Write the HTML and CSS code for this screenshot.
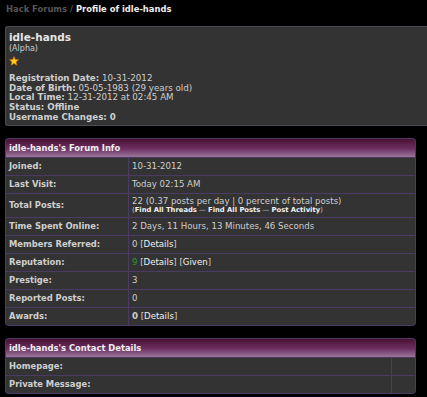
FILE: index.html
```html
<!DOCTYPE html>
<html lang="en">
<head>
  <meta charset="UTF-8">
  <meta name="viewport" content="width=device-width, initial-scale=1.0">
  <title>Hack Forums - Profile of idle-hands</title>
  <link rel="stylesheet" href="styles.css">
</head>
<body>
  <div class="page">
    <div class="breadcrumb">
      <a href="#" class="crumb-home">Hack Forums</a> <span class="crumb-sep">/</span> <span class="crumb-current">Profile of idle-hands</span>
    </div>

    <div class="profile-box">
      <div class="username">idle-hands</div>
      <div class="usertitle">(Alpha)</div>
      <div class="stars">
        <svg width="10" height="10" viewBox="0 0 10 10">
          <polygon points="5,0.6 6.3,3.6 9.5,3.8 7.1,5.9 7.9,9.2 5,7.4 2.1,9.2 2.9,5.9 0.5,3.8 3.7,3.6" fill="#ffd21a" stroke="#c86a00" stroke-width="0.8" stroke-linejoin="round"/>
        </svg>
      </div>
      <div class="profile-facts">
        <div><b>Registration Date:</b> 10-31-2012</div>
        <div><b>Date of Birth:</b> 05-05-1983 (29 years old)</div>
        <div><b>Local Time:</b> 12-31-2012 at 02:45 AM</div>
        <div><b>Status: Offline</b></div>
        <div><b>Username Changes: 0</b></div>
      </div>
    </div>

    <table class="tborder forum-info">
      <tr>
        <th colspan="2" class="thead">idle-hands's Forum Info</th>
      </tr>
      <tr>
        <td class="label">Joined:</td>
        <td>10-31-2012</td>
      </tr>
      <tr>
        <td class="label">Last Visit:</td>
        <td>Today 02:15 AM</td>
      </tr>
      <tr>
        <td class="label">Total Posts:</td>
        <td class="multi">
          22 (0.37 posts per day | 0 percent of total posts)
          <div class="smalltext">(<a href="#">Find All Threads</a> &mdash; <a href="#">Find All Posts</a> &mdash; <a href="#">Post Activity</a>)</div>
        </td>
      </tr>
      <tr>
        <td class="label">Time Spent Online:</td>
        <td>2 Days, 11 Hours, 13 Minutes, 46 Seconds</td>
      </tr>
      <tr>
        <td class="label">Members Referred:</td>
        <td>0 [<a href="#">Details</a>]</td>
      </tr>
      <tr>
        <td class="label">Reputation:</td>
        <td><span class="rep-positive">9</span> [<a href="#">Details</a>] [<a href="#">Given</a>]</td>
      </tr>
      <tr>
        <td class="label">Prestige:</td>
        <td>3</td>
      </tr>
      <tr>
        <td class="label">Reported Posts:</td>
        <td>0</td>
      </tr>
      <tr>
        <td class="label">Awards:</td>
        <td><b>0</b> [<a href="#">Details</a>]</td>
      </tr>
    </table>

    <table class="tborder contact-info">
      <tr>
        <th colspan="2" class="thead">idle-hands's Contact Details</th>
      </tr>
      <tr>
        <td class="label">Homepage:</td>
        <td></td>
      </tr>
      <tr>
        <td class="label">Private Message:</td>
        <td></td>
      </tr>
    </table>
  </div>
</body>
</html>
```

FILE: styles.css
```css
html, body {
  overflow: hidden;
}
body {
  margin: 0;
  background: #000;
  color: #cfcfcf;
  font-family: "DejaVu Sans", Verdana, sans-serif;
  font-size: 8.4px;
}
a {
  color: #f2f2f2;
  text-decoration: none;
}
.page {
  padding: 3px 0 0 5px;
}
.breadcrumb {
  padding-left: 1px;
  font-weight: bold;
  line-height: 12px;
  margin-bottom: 11px;
}
.crumb-home, .crumb-sep {
  color: #555;
}
.crumb-current {
  color: #eee;
}
.profile-box {
  background: #333;
  border: 1px solid #4d4957;
  border-right: none;
  border-radius: 3px 0 0 3px;
  padding: 4px 0 2px 3px;
  margin-bottom: 12px;
}
.username {
  font-size: 10.5px;
  font-weight: bold;
  line-height: 13px;
  color: #e6e6e6;
}
.usertitle {
  font-size: 8px;
  line-height: 10px;
}
.stars {
  height: 10px;
  margin-top: 2px;
}
.stars svg {
  display: block;
}
.profile-facts {
  margin-top: 8px;
  font-size: 8.7px;
  line-height: 9.7px;
}
.tborder {
  width: 411px;
  background: #4b3b63;
  border-spacing: 1px;
  border-radius: 4px;
  margin-bottom: 12px;
}
.thead {
  height: 18px;
  padding: 0 3px;
  text-align: left;
  color: #f0f0f0;
  font-weight: bold;
  border-radius: 3px 3px 0 0;
  background: linear-gradient(to bottom, #4a1034, #6d3162 55%, #9a779b);
}
.tborder td {
  background: #333;
  height: 17px;
  padding: 0 3px;
  line-height: 10px;
  vertical-align: middle;
}
.tborder tr:last-child td:first-child {
  border-bottom-left-radius: 3px;
}
.tborder tr:last-child td:last-child {
  border-bottom-right-radius: 3px;
}
.tborder td.label {
  font-weight: bold;
}
.forum-info td {
  font-size: 8.6px;
}
.forum-info td.label {
  width: 116px;
  font-size: 8.4px;
}
.contact-info td.label {
  width: 379px;
}
.tborder td.multi {
  padding-top: 2px;
  padding-bottom: 2px;
}
.smalltext {
  font-size: 6.8px;
  line-height: 9px;
}
.smalltext a {
  font-weight: bold;
}
.rep-positive {
  color: #2e9a2e;
}
```
